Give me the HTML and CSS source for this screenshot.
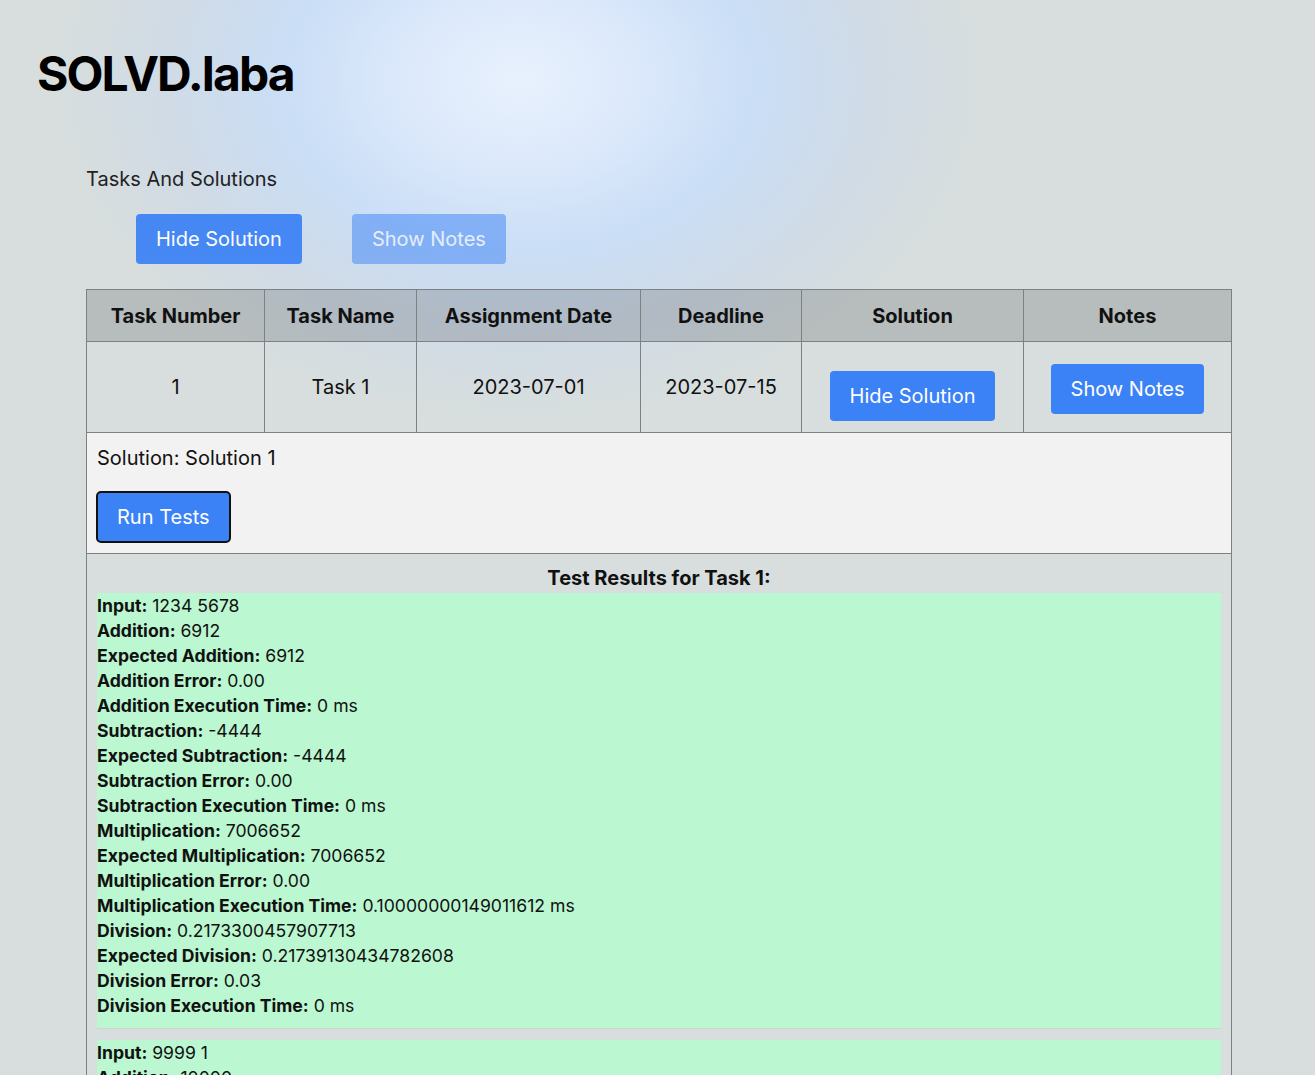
FILE: index.html
```html
<!DOCTYPE html>
<html lang="en">
<head>
<meta charset="utf-8">
<title>SOLVD.laba</title>
<link rel="stylesheet" href="styles.css">
</head>
<body>
<header class="header">
  <h1 class="logo">SOLVD.laba</h1>
</header>
<main class="content">
  <p class="section-title">Tasks And Solutions</p>
  <div class="toolbar">
    <button class="btn btn-top">Hide Solution</button>
    <button class="btn btn-top btn-disabled">Show Notes</button>
  </div>
  <table class="tasks">
    <colgroup>
      <col class="c1"><col class="c2"><col class="c3"><col class="c4"><col class="c5"><col class="c6">
    </colgroup>
    <thead>
      <tr>
        <th>Task Number</th>
        <th>Task Name</th>
        <th>Assignment Date</th>
        <th>Deadline</th>
        <th>Solution</th>
        <th>Notes</th>
      </tr>
    </thead>
    <tbody>
      <tr class="task-row">
        <td>1</td>
        <td>Task 1</td>
        <td>2023-07-01</td>
        <td>2023-07-15</td>
        <td class="btn-cell"><button class="btn btn-low">Hide Solution</button></td>
        <td class="btn-cell"><button class="btn">Show Notes</button></td>
      </tr>
      <tr class="solution-row">
        <td colspan="6">
          <p class="solution-text">Solution: Solution 1</p>
          <button class="btn btn-focus">Run Tests</button>
        </td>
      </tr>
      <tr class="results-row">
        <td colspan="6">
          <h3 class="results-title">Test Results for Task 1:</h3>
          <div class="result">
            <p><b>Input:</b> 1234 5678</p>
            <p><b>Addition:</b> 6912</p>
            <p><b>Expected Addition:</b> 6912</p>
            <p><b>Addition Error:</b> 0.00</p>
            <p><b>Addition Execution Time:</b> 0 ms</p>
            <p><b>Subtraction:</b> -4444</p>
            <p><b>Expected Subtraction:</b> -4444</p>
            <p><b>Subtraction Error:</b> 0.00</p>
            <p><b>Subtraction Execution Time:</b> 0 ms</p>
            <p><b>Multiplication:</b> 7006652</p>
            <p><b>Expected Multiplication:</b> 7006652</p>
            <p><b>Multiplication Error:</b> 0.00</p>
            <p><b>Multiplication Execution Time:</b> 0.10000000149011612 ms</p>
            <p><b>Division:</b> 0.2173300457907713</p>
            <p><b>Expected Division:</b> 0.21739130434782608</p>
            <p><b>Division Error:</b> 0.03</p>
            <p><b>Division Execution Time:</b> 0 ms</p>
          </div>
          <div class="result">
            <p><b>Input:</b> 9999 1</p>
            <p><b>Addition:</b> 10000</p>
            <p><b>Expected Addition:</b> 10000</p>
            <p><b>Addition Error:</b> 0.00</p>
            <p><b>Addition Execution Time:</b> 0 ms</p>
            <p><b>Subtraction:</b> 9998</p>
            <p><b>Expected Subtraction:</b> 9998</p>
            <p><b>Subtraction Error:</b> 0.00</p>
          </div>
        </td>
      </tr>
    </tbody>
  </table>
</main>
</body>
</html>
```

FILE: styles.css
```css
html {
  background-color: #d8dedd;
}

body {
  margin: 0;
  min-height: 1075px;
  font-family: Inter, "Noto Sans", sans-serif;
  color: #111;
  background:
    radial-gradient(ellipse 470px 340px at 520px 80px,
      #e8f1fd 0%, #dce9fb 25%, #cadef6 50%, #d0dbe6 75%, rgba(216, 222, 221, 0) 100%),
    #d8dedd;
}

.header {
  padding: 45px 37px 0;
}

.logo {
  margin: 0;
  font-size: 48px;
  line-height: 58px;
  font-weight: 700;
  letter-spacing: -1.9px;
  color: #000;
}

.content {
  padding: 0 84px 40px 86px;
}

.section-title {
  margin: 64px 0 0;
  font-size: 20px;
  line-height: 24px;
  color: #222;
}

.toolbar {
  display: flex;
  gap: 50px;
  padding-left: 50px;
  margin-top: 23px;
}

.btn {
  font-family: Inter, "Noto Sans", sans-serif;
  font-size: 20px;
  line-height: 26px;
  padding: 12px 20px;
  border: none;
  border-radius: 4px;
  background: #3b82f6;
  color: #fff;
  cursor: pointer;
}

.btn-top {
  opacity: 0.93;
}

.btn-disabled {
  opacity: 0.5;
}

.btn-low {
  margin-top: 14px;
}

.btn-focus {
  border: 2px solid #111;
  border-radius: 5px;
  padding: 11px 19px;
  line-height: 26px;
}

.tasks {
  margin-top: 25px;
  width: 1145px;
  table-layout: fixed;
  border-collapse: collapse;
  border: 1px solid #808080;
}

.c1 { width: 178px; }
.c2 { width: 152px; }
.c3 { width: 224px; }
.c4 { width: 161px; }
.c5 { width: 222px; }
.c6 { width: 208px; }

.tasks th,
.tasks td {
  border: 1px solid #808080;
}

.tasks th {
  background: rgba(0, 0, 0, 0.15);
  font-size: 20px;
  line-height: 24px;
  font-weight: 700;
  padding: 14px 8px 13px;
  color: #111;
}

.task-row td {
  text-align: center;
  vertical-align: middle;
  font-size: 20px;
  line-height: 24px;
  padding: 13px 8px;
}

.task-row .btn-cell {
  padding: 15px 8px 11px;
}

.solution-row td {
  background: #f2f2f2;
  padding: 13px 9px 10px;
}

.solution-text {
  margin: 0 0 21px 1px;
  font-size: 20px;
  line-height: 24px;
}

.results-row td {
  padding: 12px 10px 0;
}

.results-title {
  margin: 0 0 3px;
  text-align: center;
  font-size: 20px;
  line-height: 24px;
  font-weight: 700;
}

.result {
  background: #bbf7d0;
  padding-bottom: 10px;
  border-bottom: 1px solid #cdd3d3;
  margin-bottom: 11px;
}

.result p {
  margin: 0;
  font-size: 17.6px;
  line-height: 25px;
}

.result b {
  font-weight: 700;
}
```
